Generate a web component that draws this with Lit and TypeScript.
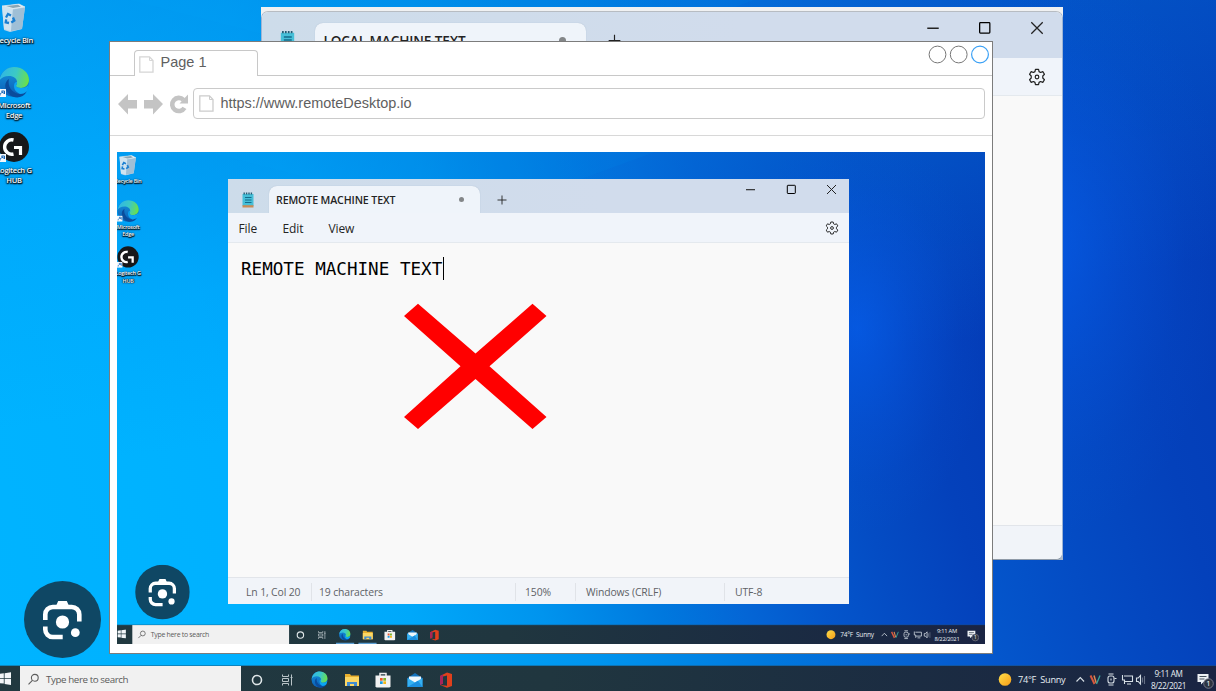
import { LitElement, html, svg, css } from "lit";
import { customElement, property } from "lit/decorators.js";

const edgeArt = svg`
  <defs>
    <linearGradient id="eg" x1="0" y1="0.3" x2="1" y2="0.5"><stop offset="0" stop-color="#2fb5e8"/><stop offset=".55" stop-color="#3cc9c4"/><stop offset="1" stop-color="#6be04a"/></linearGradient>
    <linearGradient id="eb" x1="0" y1="0" x2="0" y2="1"><stop offset="0" stop-color="#1596de"/><stop offset="1" stop-color="#0b5cb4"/></linearGradient>
  </defs>
  <circle cx="16" cy="16" r="15" fill="url(#eb)"/>
  <path d="M1 15C3 6 9 1 16 1c9 0 15 6 15 13 0 5-4 8-8 8-3 0-5-1-5-2 0-1 1-1.500 1-4 0-3.500-3.500-6-8-6C6 10 3 12 1 15z" fill="url(#eg)"/>
  <path d="M11 13c-2 8 4 15 11 15 3 0 5-1 7-3-4 8-13 8-18 3-5-5-5-12 0-15z" fill="#0a4c9c"/>
  <path d="M19 16c0 3-1 3-1 4 0 1 2 2 5 2 3.500 0 6-1 8-4l-2 7c-2 2-4 3-7 3-2-1-6-3-6-8 0-2 1-4.500 3-4z" fill="#0aa5f3"/>`;

const lensArt = svg`
  <circle cx="38.500" cy="38.500" r="38.500" fill="#0f4764"/>
  <g fill="none" stroke="#fff" stroke-width="4.600">
    <path d="M21.300 39V33.500a7.500 7.500 0 0 1 7.500-7.500H47.800a7.500 7.500 0 0 1 7.500 7.500V40.500"/>
    <path d="M21.300 45.500V48.500a7.500 7.500 0 0 0 7.500 7.500H38.700"/>
  </g>
  <path d="M32 25l2.200-5h8.600l2.200 5z" fill="#fff"/>
  <circle cx="38.500" cy="41" r="6.600" fill="#fff"/><circle cx="51.300" cy="51.700" r="4.400" fill="#fff"/>`;

const shortcut = svg`<rect x="0" y="23" width="8" height="8" fill="#f4f8fc"/><path d="M2 29.500c0-2 1-3 3-3M3.500 25h3v3z" stroke="#1565b8" stroke-width="1" fill="none"/>`;

@customElement("desktop-view")
export class DesktopView extends LitElement {
  static styles = css`
    :host {
      display: grid; grid-template-rows: 1fr 28px; position: relative;
      width: 1227px; height: 695px; overflow: hidden; font-family: "Open Sans", "Noto Sans", sans-serif;
      background:
        radial-gradient(ellipse 190px 290px at 1045px 250px, rgba(6,96,240,.65), rgba(6,90,230,.35) 45%, rgba(6,88,225,.1) 75%, transparent 100%),
        linear-gradient(172deg, rgba(0,130,225,.45) 0, rgba(0,140,240,.2) 25%, transparent 50%),
        linear-gradient(74deg, #00b4ff 0, #00b0ff 18%, #00a8fa 30%, #0094ee 43%, #0078de 55%, #0466d6 63%, #0456cc 71%, #044cc4 78%, #0441bb 87%, #0439b4 100%);
    }
    .beam { position: absolute; left: 0; top: 0; }
    .icons { display: flex; flex-direction: column; width: 40px; margin-left: -3px; position: relative; }
    .item { display: flex; flex-direction: column; align-items: center; width: 40px; }
    .item svg { display: block; }
    .bin { height: 67px; padding-top: 4px; box-sizing: border-box; }
    .bin svg { margin-left: -2px; }
    .edge { height: 65px; }
    .label {
      color: #f4f8fb; font-size: 7.600px; line-height: 10px; text-align: center; white-space: nowrap; font-weight: 600;
      letter-spacing: -.3px; text-shadow: 0 1px 1px #023, 0 0 2px #023, 0 1px 2px #023, 1px 1px 1px #023;
    }
    .bin .label { margin-top: 3px; }
    .edge .label, .logi .label { margin-top: 2px; }
    .lens { position: absolute; left: 27px; top: 581.500px; }
    .bar {
      position: relative; display: flex; align-items: stretch;
      background: linear-gradient(90deg, #213940, #20363f 45%, #1b2c42 75%, #1a2443);
      box-shadow: 0 -1px 0 rgba(30,80,110,.45);
    }
    .start { width: 23px; padding: 6px 0 0 2px; box-sizing: border-box; }
    .start svg { display: block; }
    .search { width: 221px; background: #f1f1f1; display: flex; align-items: center; box-sizing: border-box; padding: 0 0 1px 7px; gap: 6px; color: #5b5b5b; font-size: 9.800px; letter-spacing: -.42px; }
    .apps { display: flex; }
    .app { width: 31.600px; height: 28px; display: flex; justify-content: center; padding-top: 4.500px; box-sizing: border-box; }
    .app.open { box-shadow: inset 0 -3px 0 #5b9fd4; clip-path: inset(0 3px 0 3px); }
    .tray { margin-left: auto; margin-right: 10px; display: flex; align-items: flex-start; color: #e7edf2; }
    .weather { font-size: 9.200px; line-height: 28px; letter-spacing: -.28px; white-space: pre; margin-left: 6px; width: 52px; }
    .clock { width: 41px; font-size: 8.200px; line-height: 11.500px; text-align: center; letter-spacing: -.4px; padding-top: 2px; }
    .status, .note { display: block; }
    .note { margin-left: 7px; }
  `;
  render() {
    return html`
      <svg class="beam" width="1226" height="695" fill="none">
        <path d="M128 0L500 95L760 0z" fill="#0af" opacity=".07"/>
      </svg>
      <div class="icons">
        <div class="item bin">
          <svg width="26" height="29" viewBox="0 0 26 29">
            <path d="M2 3l17-2 6 3-3 22-12 3-6-2z" fill="#b9d6ea"/><path d="M2 3l11 3-2 22-7-2z" fill="#cfe3f0"/><path d="M13 6l12-2-3 22-11 2z" fill="#9fbfd6"/>
            <path d="M2 3l17-2 6 3-12 2z" fill="#e2edf3" stroke="#d7e6ee" stroke-width=".6"/><path d="M6 3l12-1.200 3 2-8 1.300z" fill="#8aa6b5"/>
            <g fill="none" stroke="#1a7fd2" stroke-width="2.300"><path d="M6 14.500l2-3.500 3 1.500"/><path d="M13 14.500l1.300 3-3 2"/><path d="M9 20l-3.300-.6.500-3"/></g>
          </svg>
          <div class="label">Recycle Bin</div>
        </div>
        <div class="item edge">
          <svg width="32" height="32" viewBox="0 0 32 32">${edgeArt}${shortcut}</svg>
          <div class="label">Microsoft<br />Edge</div>
        </div>
        <div class="item logi">
          <svg width="32" height="32" viewBox="0 0 32 32">
            <circle cx="16" cy="16" r="15" fill="#17181a"/>
            <path d="M15.500 9A7.200 7.200 0 1 0 15.500 23" fill="none" stroke="#fff" stroke-width="3.400"/>
            <path d="M16 16.500h6.500V24" fill="none" stroke="#fff" stroke-width="3.200"/>${shortcut}
          </svg>
          <div class="label">Logitech G<br />HUB</div>
        </div>
      </div>
      <svg class="lens" width="77" height="77" viewBox="0 0 77 77">${lensArt}</svg>
      <div class="bar">
        <div class="start">
          <svg width="12" height="13" viewBox="0 0 12 13" fill="#f2f6f8"><path d="M0 2l4.800-.7V6H0zM5.600 1.200L12 .3V6H5.600zM0 6.800h4.800v4.800L0 11zM5.600 6.800H12V13l-6.400-1z"/></svg>
        </div>
        <div class="search">
          <svg width="13" height="13" viewBox="0 0 13 13" fill="none" stroke="#5c5c5c" stroke-width="1.100"><circle cx="7.800" cy="4.800" r="3.400"/><path d="M5.400 7.400L1.500 11.300"/></svg>
          <span>Type here to search</span>
        </div>
        <div class="apps">
          <div class="app"><svg width="18" height="18"><circle cx="9" cy="9" r="4.500" fill="none" stroke="#dfe6e8" stroke-width="1.600"/></svg></div>
          <div class="app"><svg width="18" height="18" fill="none" stroke="#b9c4c8" stroke-width="1"><path d="M3.500 3.500v2h6v-2M3.500 14.500v-2h6v2M3.500 7.500h6v3h-6zM12.500 3.500v11M11.500 6.500h2"/></svg></div>
          <div class="app open"><svg width="17" height="17" viewBox="0 0 32 32">${edgeArt}</svg></div>
          <div class="app open"><svg width="18" height="18"><path d="M2 3h5l1 1.500h8V15H2z" fill="#e9b02e"/><path d="M2 6h14v9H2z" fill="#fbd765"/><path d="M4 15v-4h10v4h-3v-2H7v2z" fill="#3f8bd0"/></svg></div>
          <div class="app"><svg width="18" height="18"><path d="M6 5V2.500h6V5" fill="none" stroke="#eee" stroke-width="1.500"/><path d="M1.500 4.500h15V15.500l-1 1h-13l-1-1z" fill="#f2f2f2"/><path d="M6 7h2.700v2.700H6z" fill="#e8572a"/><path d="M9.300 7H12v2.700H9.300z" fill="#7cb52c"/><path d="M6 10.300h2.700V13H6z" fill="#1b9ce3"/><path d="M9.300 10.300H12V13H9.300z" fill="#f4b61a"/></svg></div>
          <div class="app"><svg width="18" height="18"><path d="M1.500 7L9 2l7.500 5v9h-15z" fill="#1272bd"/><path d="M3 5.500h12V12H3z" fill="#eef7fc"/><path d="M1.500 7L9 11.500 16.500 7v9h-15z" fill="#35b0f2"/><path d="M1.500 16L12 9.800l4.500 6.200z" fill="#1b8fe0"/></svg></div>
          <div class="app"><svg width="18" height="18"><path d="M3 5l7-3.500 5 1.500v12l-5 1.800L3 14l7 .8V4.500L6 5.600v6.800L3 14z" fill="#e0401c"/><path d="M3 5l3-1.500v8.900L3 14z" fill="#a8235c"/></svg></div>
        </div>
        <div class="tray">
          <svg width="14" height="27" viewBox="0 0 14 27"><defs><linearGradient id="sun" x2="1" y2="1"><stop stop-color="#ffdf4a"/><stop offset="1" stop-color="#f59c17"/></linearGradient></defs><circle cx="7" cy="13.500" r="6.300" fill="url(#sun)"/></svg>
          <div class="weather">74°F  Sunny</div>
          <svg class="status" width="78" height="27" viewBox="0 -.5 78 27" fill="none" stroke="#d7dfe6" stroke-width="1.100">
            <path d="M6.500 15l3.800-4 3.800 4"/>
            <path d="M20.500 9l4 8.500" stroke="#d8583f" stroke-width="2"/><path d="M24 9l2.200 7.500" stroke="#e0884f" stroke-width="1.500"/><path d="M30 9l-3.500 8.500" stroke="#37a49c" stroke-width="1.300"/>
            <rect x="38" y="9.500" width="6" height="7" rx="2"/><path d="M38.500 7.500h5M38.500 18.500h5M41 12v2M44.500 12h2"/>
            <path d="M54 9.500h8.500v5.500H55M52.500 8.500v5h2v4M57 17.500h4"/>
            <path d="M66.500 11.500h1.700l2.300-2.500v8.500l-2.300-2.500h-1.700z"/><path d="M72.500 11v5M74.500 9.500v8" opacity=".4"/>
          </svg>
          <div class="clock">9:11 AM<br />8/22/2021</div>
          <svg class="note" width="18" height="27" viewBox="0 0 18 27"><path d="M1.500 8h11v8H7.500L5 18.500V16H1.500z" fill="#edf1f5"/><path d="M3.500 10.500h7M3.500 13h5" stroke="#44505c"/><circle cx="12.500" cy="17.500" r="4.800" fill="#2d3440" stroke="#889" stroke-width=".8"/><text x="12.500" y="20.300" font-size="7.500" fill="#fff" text-anchor="middle">1</text></svg>
        </div>
      </div>
    `;
  }
}

@customElement("notepad-window")
export class NotepadWindow extends LitElement {
  @property() title = "";
  @property({ type: Boolean, reflect: true }) large = false;
  static styles = css`
    :host {
      display: grid; grid-template-rows: 34px 30px 1fr 27px; width: 621px; height: 425px; overflow: hidden; box-sizing: border-box;
      font-family: "Open Sans", "Noto Sans", sans-serif; color: #242424; background: #f9f9f9;
    }
    :host([large]) {
      grid-template-rows: 46px 38px 1fr 34px; width: 802px; height: 549px; border: 1px solid #b9c0c6; border-radius: 7px;
      border-color: #b7bcc2 #9db4d4 #8f9aa8 #9db4d4;
    }
    .head { background: linear-gradient(90deg, #cddcea, #d1dcec 60%); display: flex; align-items: flex-start; }
    .app { margin: 12.500px 0 0 12.500px; width: 14px; height: 16px; flex: none; }
    .tab { margin: 6.500px 0 0 14px; width: 211.500px; height: 28px; background: #eff4fa; border-radius: 8px 8px 0 0; box-sizing: border-box; display: flex; align-items: center; justify-content: space-between; padding: 0 16px 0 7.500px; font-size: 10.600px; font-weight: 600; letter-spacing: -.12px; white-space: nowrap; box-shadow: 0 0 1px #9fb2c6; }
    .dot { width: 5.500px; height: 5.500px; border-radius: 50%; background: #838688; }
    .plus { margin: 16px 0 0 17px; width: 10px; height: 10px; flex: none; }
    .ctl { margin: 5px 12px 0 auto; display: flex; gap: 29.500px; }
    .ctl svg, .plus, .gear { display: block; fill: none; stroke: #222; }
    .menu { background: #f0f4fa; display: flex; align-items: center; padding: 0 10.500px; border-bottom: 1px solid #e4e9ee; box-sizing: border-box; font-size: 12px; letter-spacing: -.1px; }
    .menu span { width: 45px; white-space: nowrap; padding-top: 1px; }
    .menu .edit { margin-left: -1px; width: 46px; }
    .gear { margin-left: auto; width: 14px; height: 14px; }
    .body { padding: 14px 0 0 13px; font: 17.600px/24px "DejaVu Sans Mono", "Liberation Mono", monospace; color: #000; display: flex; align-items: flex-start; white-space: pre; }
    .caret { width: 1px; height: 23px; background: #000; margin-left: 1px; }
    .foot { background: #f1f4f9; border-top: 1px solid #e2e5ea; box-sizing: border-box; font-size: 10.400px; color: #606266; display: flex; align-items: center; padding: 2px 0 0 18px; letter-spacing: -.12px; }
    .foot span { box-sizing: border-box; line-height: 18px; white-space: nowrap; }
    .foot span + span { border-left: 1px solid #e0e3e8; }
    .c1 { width: 65px; } .c2 { width: 204px; padding-left: 7px; } .c3 { width: 60px; padding-left: 9px; } .c4 { width: 149px; padding-left: 10px; } .c5 { padding-left: 10px; }
    :host([large]) .app { margin: 17.500px 0 0 17px; width: 17px; height: 20px; }
    :host([large]) .tab { margin: 11px 0 0 18.500px; width: 271px; height: 35px; padding: 0 20px 0 9px; font-size: 13.600px; }
    :host([large]) .dot { width: 7px; height: 7px; }
    :host([large]) .plus { margin: 22px 0 0 22px; width: 13px; height: 13px; }
    :host([large]) .ctl { margin: 8.500px 18.500px 0 auto; gap: 38px; }
    :host([large]) .ctl svg { width: 14px; height: 14px; }
    :host([large]) .menu { padding-right: 16px; }
    :host([large]) .gear { width: 18px; height: 18px; }
  `;
  render() {
    return html`
      <div class="head">
        <svg class="app" viewBox="0 0 14 16"><path d="M1.500 2h11v12h-11z" fill="#46bfd8"/><path d="M1.500 13.200h11v2.300h-11z" fill="#c98b55"/><path d="M4 5.500h6.500M4 8h6.500M4 10.500h6.500" stroke="#146c8c" stroke-width="1.100"/><path d="M2.500 1.500h9.500" stroke="#225d75" stroke-width="2" stroke-dasharray="1.400 1"/></svg>
        <div class="tab"><span>${this.title}</span><i class="dot"></i></div>
        <svg class="plus" viewBox="0 0 10 10"><path d="M5 .5v9M.5 5h9" stroke-width=".9"/></svg>
        <div class="ctl">
          <svg width="11" height="11" viewBox="0 0 11 11"><path d="M1 5.700h9" stroke-width="1.100"/></svg>
          <svg width="11" height="11" viewBox="0 0 11 11"><rect x="1.300" y="1.300" width="8" height="8.200" rx=".6" stroke="#000" stroke-width="1"/></svg>
          <svg width="11" height="11" viewBox="0 0 11 11"><path d="M1 1l9 9M10 1l-9 9" stroke-width="1"/></svg>
        </div>
      </div>
      <div class="menu">
        ${this.large ? "" : html`<span>File</span><span class="edit">Edit</span><span>View</span>`}
        <svg class="gear" viewBox="0 0 14 14" stroke-width=".95" stroke-linejoin="round"><path d="M5.800 1h2.400l.4 1.800 1.200.7 1.700-.7 1.300 2.100-1.300 1.300v1.600l1.300 1.300-1.300 2.100-1.700-.7-1.200.7-.4 1.800H5.800l-.4-1.800-1.200-.7-1.700.7-1.300-2.100 1.300-1.300V6.200L1.200 4.900l1.300-2.100 1.700.7 1.200-.7z"/><circle cx="7" cy="7" r="1.400"/></svg>
      </div>
      <div class="body">${this.large ? "" : html`<span>${this.title}</span><i class="caret"></i>`}</div>
      <div class="foot">
        ${this.large ? "" : html`<span class="c1">Ln 1, Col 20</span><span class="c2">19 characters</span><span class="c3">150%</span><span class="c4">Windows (CRLF)</span><span class="c5">UTF-8</span>`}
      </div>
    `;
  }
}

@customElement("app-root")
export class AppRoot extends LitElement {
  static styles = css`
    :host { display: flow-root; position: relative; width: 1216px; height: 691px; overflow: hidden; }
    .outer { margin: -1px 0 0 -3px; }
    .local { position: absolute; left: 261px; top: 7px; width: 802px; height: 553px; background: linear-gradient(#f0f1f2 10px, #a9b6c8 10px); padding-top: 4px; box-sizing: border-box; }
    .browser { position: absolute; left: 109px; top: 41px; width: 884px; height: 613px; box-sizing: border-box; background: #fff; border: 1px solid #7c7c7c; display: flex; flex-direction: column; font-family: "Liberation Sans", Arial, sans-serif; color: #606060; }
    .tabs { height: 34px; border-bottom: 1px solid #c8c8c8; box-sizing: border-box; display: flex; justify-content: space-between; }
    .tab { margin: 8px 0 0 24px; width: 124px; height: 26px; box-sizing: border-box; background: #fff; border: 1px solid #c8c8c8; border-bottom: 0; border-radius: 4px 4px 0 0; display: flex; padding: 3px 0 0 4px; gap: 6.500px; font-size: 14.500px; line-height: 17px; }
    .tab svg { margin-top: 2px; }
    .tab svg, .bar svg, .dots { display: block; }
    .bar { height: 60px; box-sizing: border-box; border-bottom: 1px solid #d8d8d8; display: flex; align-items: flex-start; padding: 12px 7px 0 8px; }
    .nav { margin-top: 5px; }
    .url { margin-left: 4px; flex: 1; height: 31px; box-sizing: border-box; border: 1px solid #cacaca; border-radius: 4px; display: flex; padding: 6px 5px 0; gap: 6.500px; font-size: 14.450px; line-height: 17px; }
    .view { margin: 16px 0 0 7px; width: 868px; height: 492px; overflow: hidden; position: relative; }
    .inner { margin-left: -1px; transform: scale(.7093); transform-origin: 0 0; }
    .remote { position: absolute; left: 228px; top: 179px; }
    .cross { position: absolute; left: 404px; top: 303px; }
  `;
  render() {
    const page = svg`<path d="M.8.800H10.500L14 4.500V16.200H.8z" fill="#fff" stroke="#ccc" stroke-width="1.300"/><path d="M10.500 1V4.500H14" fill="none" stroke="#ccc"/>`;
    return html`
      <desktop-view class="outer"></desktop-view>
      <div class="local"><notepad-window large title="LOCAL MACHINE TEXT"></notepad-window></div>
      <div class="browser">
        <div class="tabs">
          <div class="tab"><svg width="15" height="17" opacity=".8">${page}</svg><span>Page 1</span></div>
          <svg class="dots" width="66" height="24" fill="#fff" stroke="#777" stroke-width="1"><circle cx="11.500" cy="12.500" r="8.400"/><circle cx="32.700" cy="12.500" r="8.400"/><circle cx="54" cy="12.500" r="8.400" stroke="#3aa0f5" stroke-width="1.200"/></svg>
        </div>
        <div class="bar">
          <svg class="nav" width="71" height="23" fill="#c4c4c4">
            <path d="M0 11L10 1V7H19V15.500H10V21.500z"/><path d="M45 11L35 1V7H26V15.500H35V21.500z"/>
            <path d="M66.500 14.800A6.600 6.600 0 1 1 65.500 6.800" fill="none" stroke="#c4c4c4" stroke-width="4.600"/><path d="M70 1.500V10.500H61.500z"/>
          </svg>
          <div class="url"><svg width="15" height="17">${page}</svg><span>https://www.remoteDesktop.io</span></div>
        </div>
        <div class="view"><desktop-view class="inner"></desktop-view></div>
      </div>
      <notepad-window class="remote" title="REMOTE MACHINE TEXT"></notepad-window>
      <svg class="cross" width="143" height="127" fill="#f00"><path d="M0 13L14 .8 71.500 50.500 128.500.8 142.500 13 85.500 63.300 142.500 114 128.500 126 71.500 76 14 126 0 114 56.500 63.300z"/></svg>
    `;
  }
}
